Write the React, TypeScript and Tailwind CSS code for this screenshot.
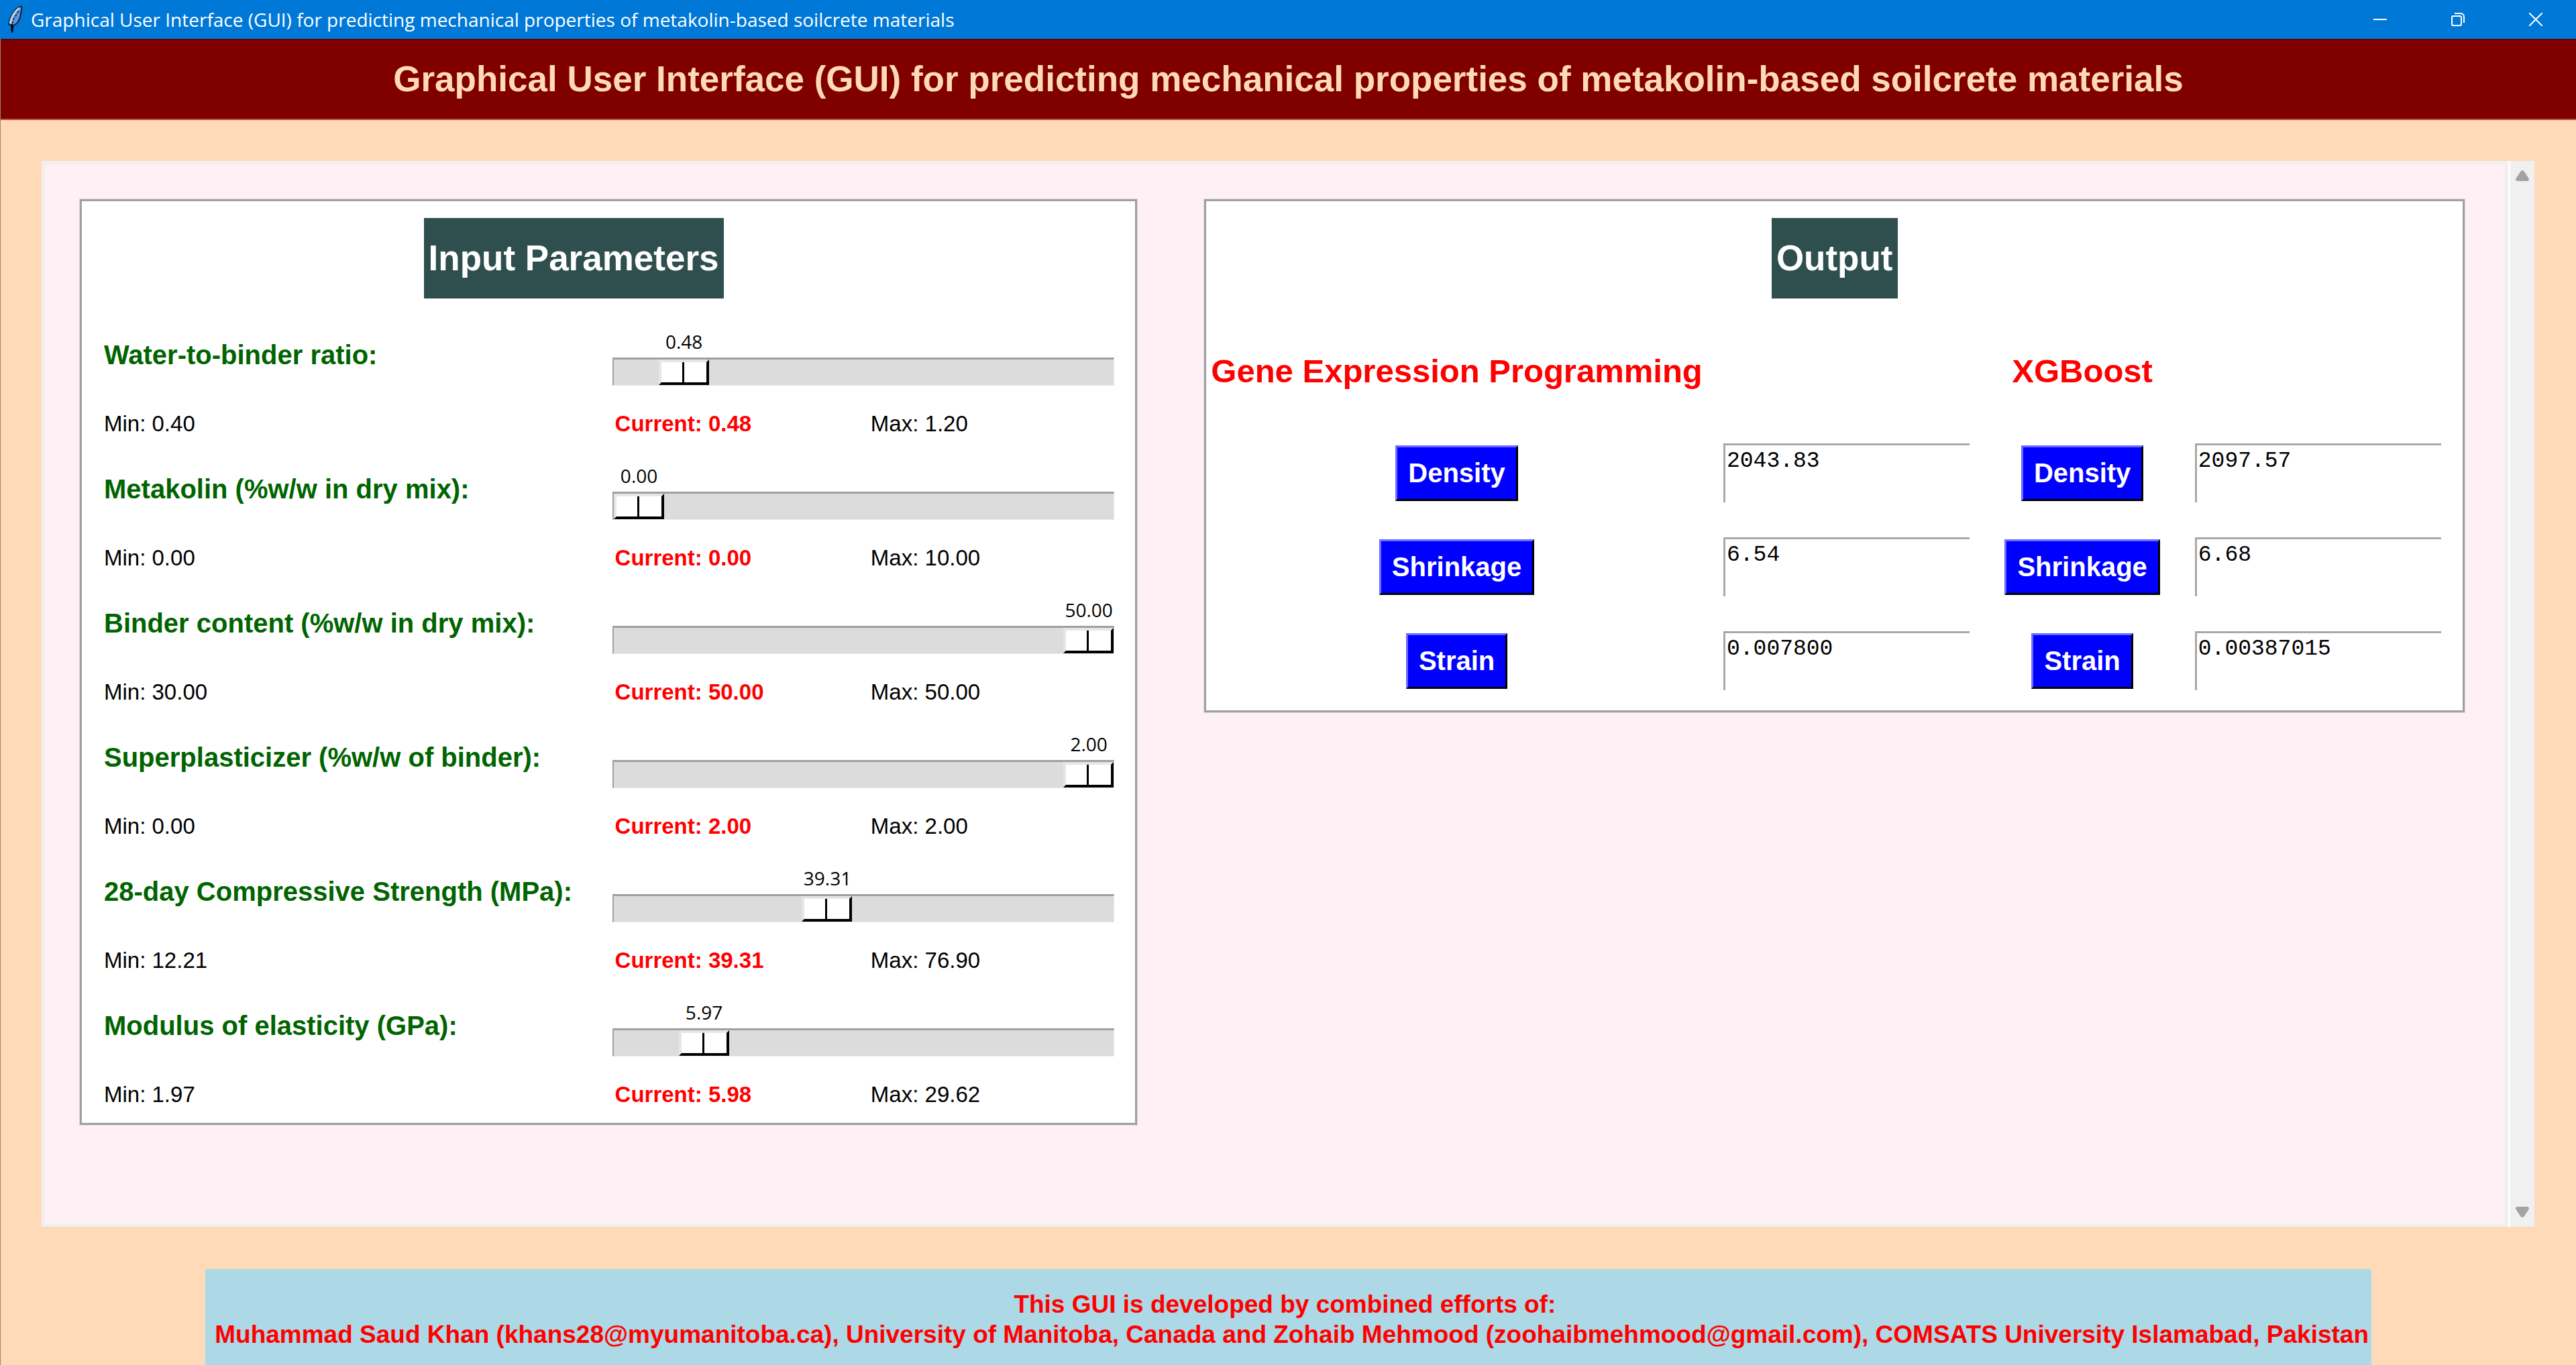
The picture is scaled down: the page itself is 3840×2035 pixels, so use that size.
import React, { useState } from "react";

const TITLE =
  "Graphical User Interface (GUI) for predicting mechanical properties of metakolin-based soilcrete materials";

type Parameter = {
  id: string;
  label: string;
  min: number;
  max: number;
  scale: number;
  current: number;
};

const PARAMETERS: Parameter[] = [
  { id: "wb", label: "Water-to-binder ratio:", min: 0.4, max: 1.2, scale: 0.48, current: 0.48 },
  { id: "mk", label: "Metakolin (%w/w in dry mix):", min: 0, max: 10, scale: 0, current: 0 },
  { id: "bc", label: "Binder content (%w/w in dry mix):", min: 30, max: 50, scale: 50, current: 50 },
  { id: "sp", label: "Superplasticizer (%w/w of binder):", min: 0, max: 2, scale: 2, current: 2 },
  { id: "cs", label: "28-day Compressive Strength (MPa):", min: 12.21, max: 76.9, scale: 39.31, current: 39.31 },
  { id: "me", label: "Modulus of elasticity (GPa):", min: 1.97, max: 29.62, scale: 5.97, current: 5.98 },
];

const RESULTS = [
  { name: "Density", gep: "2043.83", xgb: "2097.57" },
  { name: "Shrinkage", gep: "6.54", xgb: "6.68" },
  { name: "Strain", gep: "0.007800", xgb: "0.00387015" },
];

function FeatherIcon() {
  return (
    <svg viewBox="0 0 24 42" className="h-[42px] w-6" aria-hidden="true">
      <path
        d="M21 1.500C17 2 12 6 9 11C5 17 2 22 2 28L6 30L7 40L9 30L14 27C18 22 20 17 20 11C21 8 22 4 21 1.500Z"
        fill="#5f93dc"
        stroke="#0f2136"
        strokeWidth="2"
        strokeLinejoin="round"
      />
      <path d="M18 4C13 7 9 13 6 20L4 27" stroke="#c3d9ee" strokeWidth="3" fill="none" />
      <path d="M17 8L9 21L7 29" stroke="#0f2136" strokeWidth="1.500" strokeDasharray="4 2" fill="none" />
      <path d="M7 28V39" stroke="#000000" strokeWidth="2.500" fill="none" />
    </svg>
  );
}

function TitleBar() {
  return (
    <div className="flex h-[58px] items-center bg-[#0078d7] pr-0.5 pl-[11px] text-white">
      <FeatherIcon />
      <span className="ml-[11px] grow font-['Open_Sans','Noto_Sans',sans-serif] text-[28px] leading-10">{TITLE}</span>
      <button type="button" aria-label="Minimize" className="flex h-full w-[116px] items-center justify-center">
        <svg viewBox="0 0 20 20" className="size-5" stroke="currentColor" strokeWidth="2" fill="none">
          <path d="M0 10h20" />
        </svg>
      </button>
      <button type="button" aria-label="Restore" className="flex h-full w-[116px] items-center justify-center">
        <svg viewBox="0 0 20 20" className="size-5" stroke="currentColor" strokeWidth="2" fill="none">
          <rect x="1" y="5" width="14" height="14" rx="2" />
          <path d="M5 1h9a5 5 0 0 1 5 5v9" />
        </svg>
      </button>
      <button type="button" aria-label="Close" className="flex h-full w-[116px] items-center justify-center">
        <svg viewBox="0 0 20 20" className="size-5" stroke="currentColor" strokeWidth="2" fill="none">
          <path d="M0 0l20 20M20 0L0 20" />
        </svg>
      </button>
    </div>
  );
}

function PanelTitle({ children }: { children: React.ReactNode }) {
  return (
    <h2 className="mx-auto flex h-[120px] w-fit items-center bg-[#2f4f4f] px-[7px] text-[53px] font-bold text-white">
      {children}
    </h2>
  );
}

function ParameterRow({ parameter }: { parameter: Parameter }) {
  const { id, label, min, max } = parameter;
  const [value, setValue] = useState(parameter.scale);
  const [current, setCurrent] = useState(parameter.current);
  const fraction = (value - min) / (max - min);

  return (
    <div className="grid grid-cols-[757fr_381fr_367fr] gap-y-[37px]">
      <label htmlFor={id} className="self-center text-[40px] leading-[48px] font-bold text-[#006400]">
        {label}
      </label>
      <div className="relative col-span-2 h-[92px] pt-[50px]">
        <output
          htmlFor={id}
          className="absolute top-2 -translate-x-1/2 font-['Open_Sans','Noto_Sans',sans-serif] text-[28px] leading-9 text-black"
          style={{ left: `calc(40px + ${fraction} * (100% - 78px))` }}
        >
          {value.toFixed(2)}
        </output>
        <input
          id={id}
          type="range"
          min={min}
          max={max}
          step={0.01}
          value={value}
          onChange={(e) => {
            setValue(Number(e.target.value));
            setCurrent(Number(e.target.value));
          }}
          className="block h-[42px] w-full appearance-none border-t-[3px] border-r border-b border-l-2 border-t-[#a0a0a0] border-r-[#e8e8e8] border-b-[#e8e8e8] border-l-[#a0a0a0] bg-[#dcdcdc] [&::-webkit-slider-thumb]:h-[38px] [&::-webkit-slider-thumb]:w-[75px] [&::-webkit-slider-thumb]:appearance-none [&::-webkit-slider-thumb]:border-4 [&::-webkit-slider-thumb]:border-t-[#e6e6e6] [&::-webkit-slider-thumb]:border-r-black [&::-webkit-slider-thumb]:border-b-black [&::-webkit-slider-thumb]:border-l-[#e6e6e6] [&::-webkit-slider-thumb]:bg-[linear-gradient(90deg,white_31px,black_31px,black_34px,white_34px)]"
        />
      </div>
      <span className="text-[33px] leading-10 text-black">Min: {min.toFixed(2)}</span>
      <span className="pl-1 text-[33px] leading-10 font-bold text-[#ff0000]">Current: {current.toFixed(2)}</span>
      <span className="pl-1 text-[33px] leading-10 text-black">Max: {max.toFixed(2)}</span>
    </div>
  );
}

function ResultButton({ children }: { children: React.ReactNode }) {
  return (
    <button
      type="button"
      className="justify-self-center border-[3px] border-t-[#6a6aff] border-r-black border-b-black border-l-[#6a6aff] bg-[#0000ff] px-4 text-[40px] leading-[77px] font-bold text-white"
    >
      {children}
    </button>
  );
}

function ResultBox({ label, value }: { label: string; value: string }) {
  return (
    <textarea
      aria-label={label}
      defaultValue={value}
      className="mx-6 block h-[88px] resize-none overflow-hidden border-t-[3px] border-l-[3px] border-[#a8a8a8] bg-white px-0.5 pt-1 font-['Liberation_Mono',monospace] text-[33px] leading-10 text-black"
    />
  );
}

function ScrollArrow({ down }: { down?: boolean }) {
  return (
    <button type="button" aria-label={down ? "Scroll down" : "Scroll up"} className="flex h-11 w-full items-center justify-center">
      <svg viewBox="0 0 20 16" className="h-4 w-5" fill="#a3a3a3">
        {down ? (
          <path d="M2 0h16q3 1 1.500 4l-6.500 10q-3 4-6 0L.5 4Q-1 1 2 0z" />
        ) : (
          <path d="M2 16h16q3-1 1.500-4L13 2q-3-4-6 0L.5 12Q-1 15 2 16z" />
        )}
      </svg>
    </button>
  );
}

export default function App() {
  return (
    <div className="flex min-h-screen flex-col bg-[#ffdab9] font-['Liberation_Sans',Arial,sans-serif]">
      <TitleBar />
      <div className="flex grow flex-col border-l border-black/40">
        <h1 className="flex h-[121px] items-center justify-center border-t border-b-2 border-t-[#400000] border-b-[#b55040] bg-[#800000] text-[53px] font-bold whitespace-nowrap text-[#ffdab9]">
          {TITLE}
        </h1>

        <main className="mt-[61px] mr-[62px] mb-[63px] ml-[61px] flex grow">
          <div className="grid grow grid-cols-[1576fr_1879fr] items-start gap-[100px] border-[5px] border-[#f0f0f0] bg-[#fff0f5] pt-[52px] pr-[60px] pl-[52px]">
            <section className="border-[3px] border-[#a0a0a0] bg-white pt-[25px] pr-[31px] pb-[22px] pl-[33px] shadow-[0_0_0_1px_#dcdcdc]">
              <div className="pr-[106px]">
                <PanelTitle>Input Parameters</PanelTitle>
              </div>
              <div className="mt-[38px] flex flex-col gap-[31px]">
                {PARAMETERS.map((p) => (
                  <ParameterRow key={p.id} parameter={p} />
                ))}
              </div>
            </section>

            <section className="border-[3px] border-[#a0a0a0] bg-white pt-[25px] pb-[30px] shadow-[0_0_0_1px_#dcdcdc]">
              <PanelTitle>Output</PanelTitle>
              <div className="mt-20 grid grid-cols-[746fr_415fr_287fr_415fr] items-center gap-y-[52px] pr-2">
                <h3 className="pb-7 text-center text-[49px] leading-14 font-bold text-[#ff0000]">
                  Gene Expression Programming
                </h3>
                <h3 className="col-start-3 pb-7 text-center text-[49px] leading-14 font-bold text-[#ff0000]">XGBoost</h3>
                <div />
                {RESULTS.map((r) => (
                  <React.Fragment key={r.name}>
                    <ResultButton>{r.name}</ResultButton>
                    <ResultBox label={`${r.name}, Gene Expression Programming`} value={r.gep} />
                    <ResultButton>{r.name}</ResultButton>
                    <ResultBox label={`${r.name}, XGBoost`} value={r.xgb} />
                  </React.Fragment>
                ))}
              </div>
            </section>
          </div>
          <div className="flex w-[42px] flex-col justify-between border-l-[3px] border-white bg-[#f0f0f0]">
            <ScrollArrow />
            <ScrollArrow down />
          </div>
        </main>

        <footer className="mx-auto w-fit bg-[#add8e6] px-1 pt-[30px] pb-[23px] text-center text-[37px] leading-[45px] font-bold whitespace-pre text-[#ff0000]">
          <p>{"This GUI is developed by combined efforts of: "}</p>
          <p>
            {
              " Muhammad Saud Khan (khans28@myumanitoba.ca), University of Manitoba, Canada and Zohaib Mehmood (zoohaibmehmood@gmail.com), COMSATS University Islamabad, Pakistan"
            }
          </p>
        </footer>
      </div>
    </div>
  );
}
